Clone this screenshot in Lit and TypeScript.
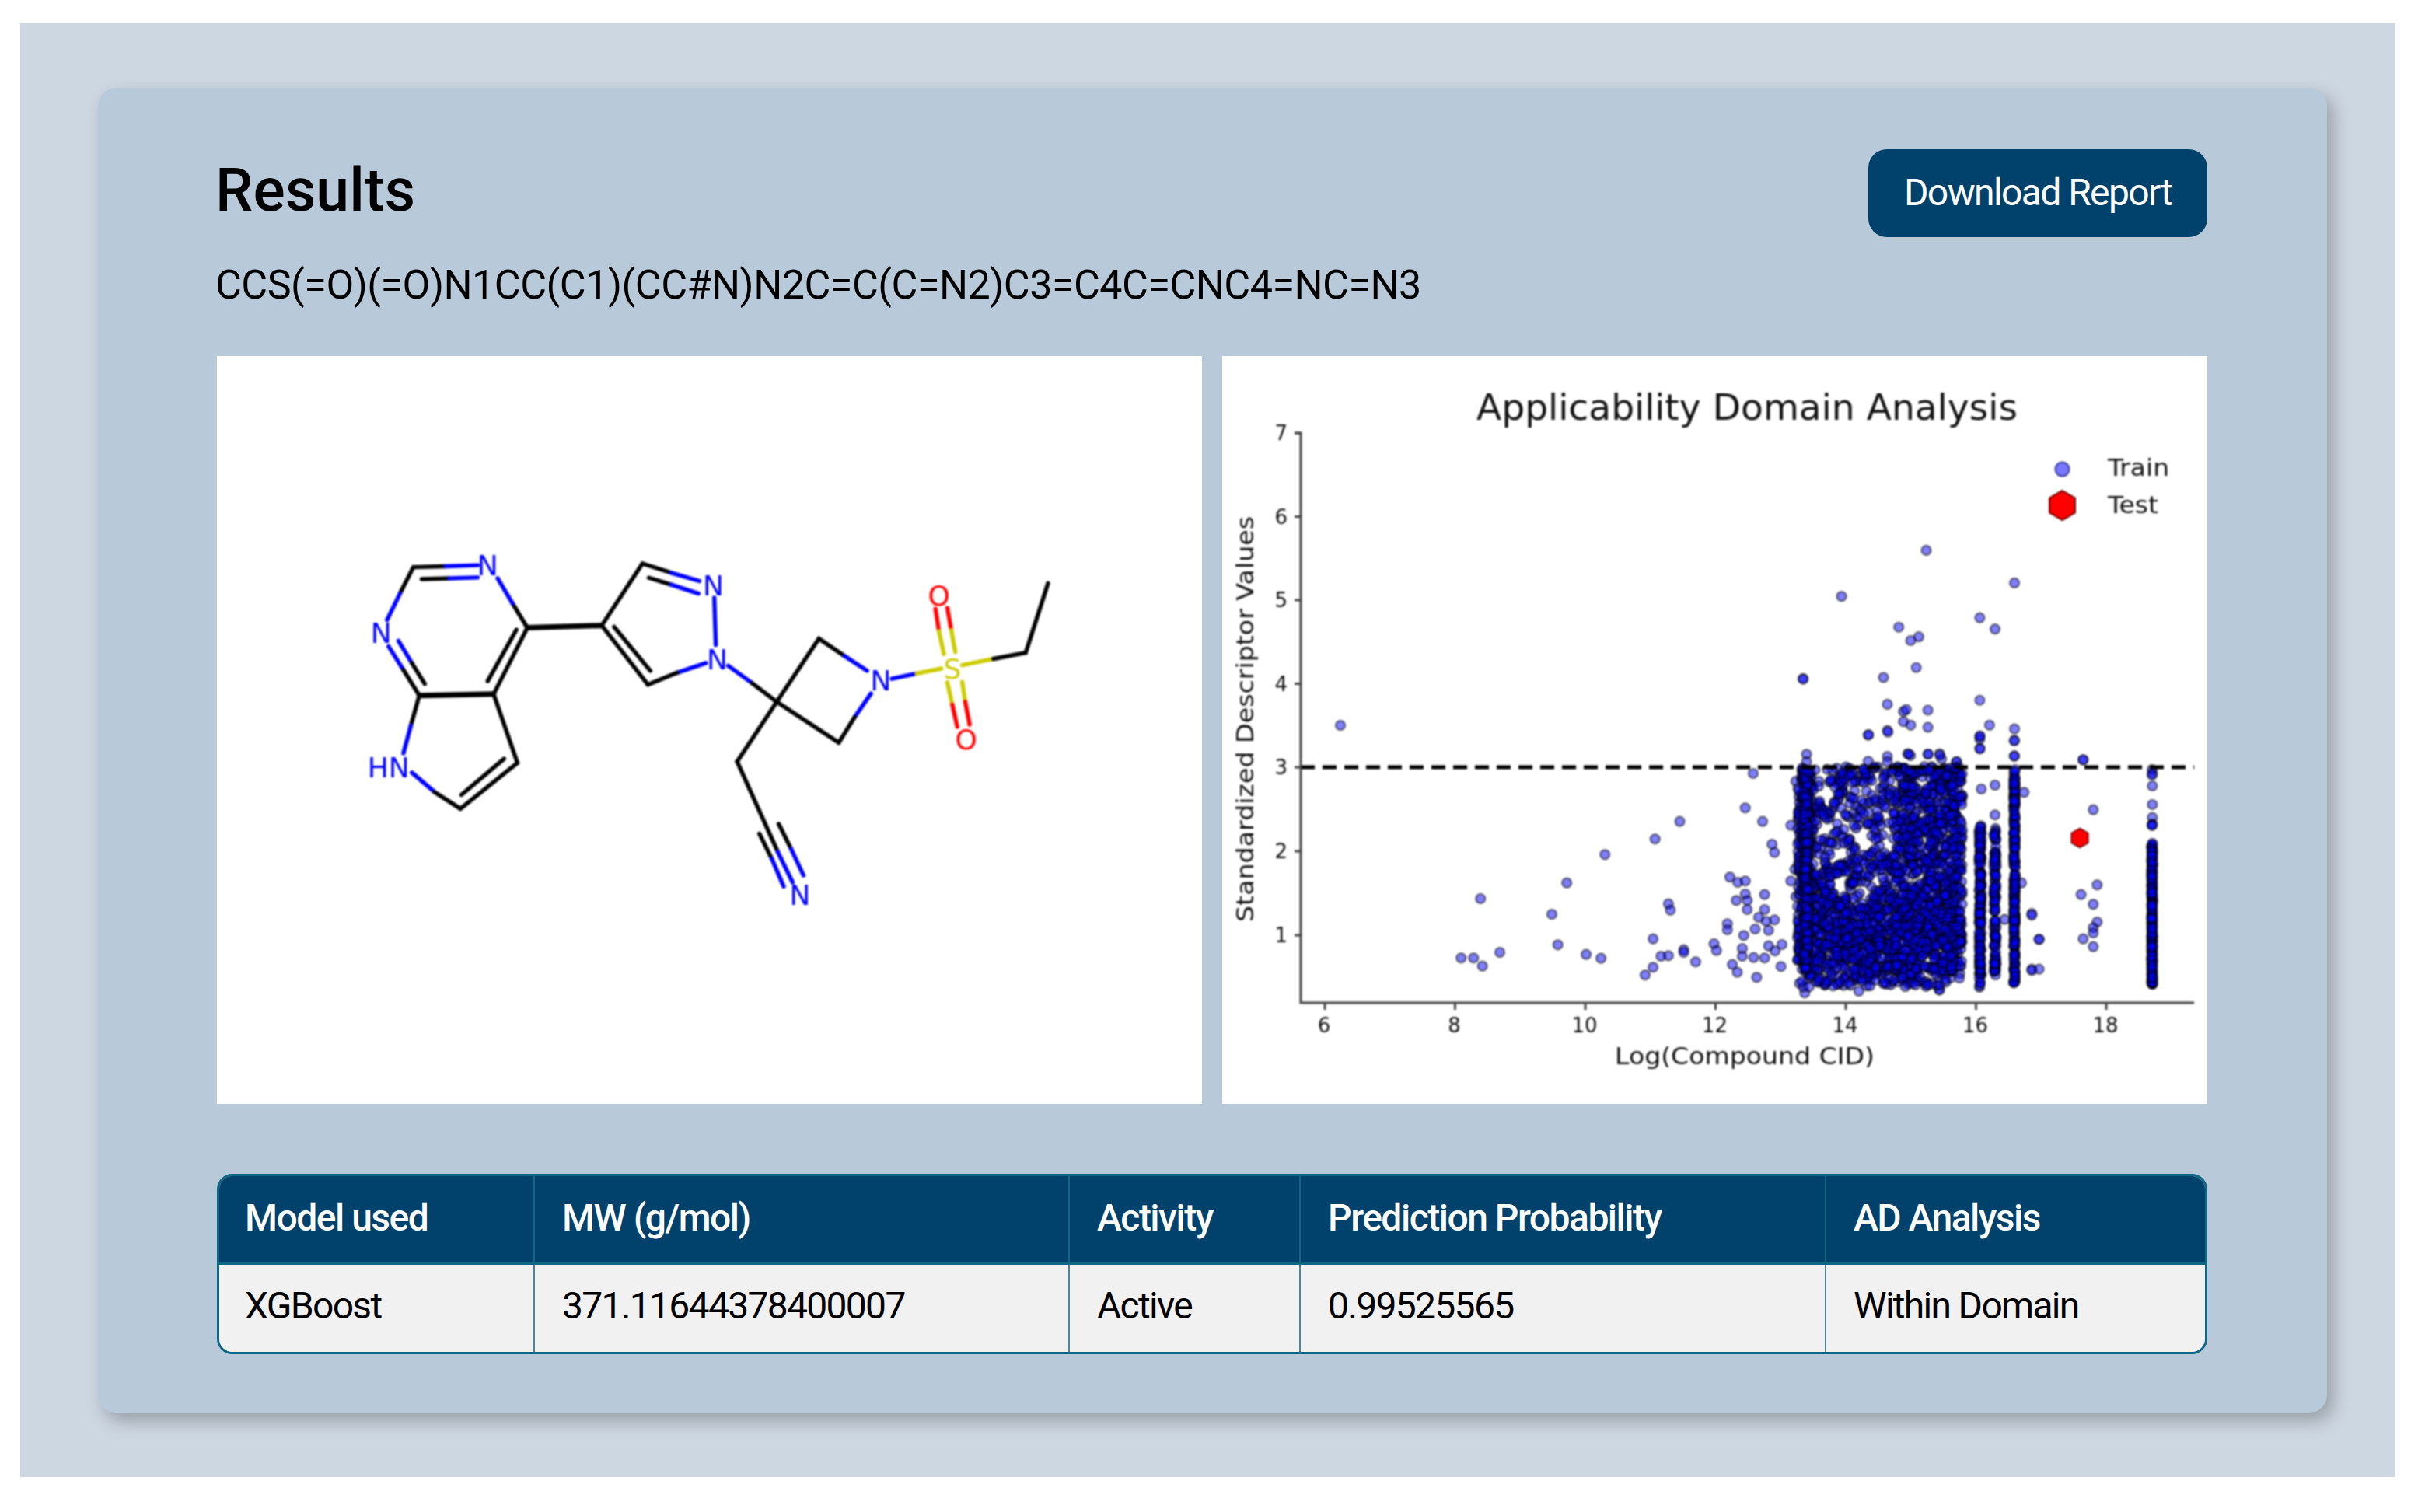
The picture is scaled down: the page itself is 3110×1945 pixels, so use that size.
import { LitElement, html, css, svg } from "lit";
import { customElement } from "lit/decorators.js";

const BLUE = "#0000ff", RED = "#ff0000", YEL = "#cccc00", BLK = "#000000";
type Seg = [number, number, number, number, string, number?];

// coordinates are read off the reference's molecule region
const mx = (x: number) => 420 + x / 1.568;
const my = (y: number) => 660 + y / 2.8;

const BONDS: Seg[] = [
  [175, 195, 240, 192, BLK], [240, 192, 305, 188, BLUE], [192, 238, 248, 235, BLK], [248, 235, 305, 232, BLUE],
  [175, 195, 148, 290, BLK], [148, 290, 122, 385, BLUE],
  [125, 480, 155, 565, BLUE], [155, 565, 187, 657, BLK], [145, 460, 172, 540, BLUE], [172, 540, 198, 615, BLK],
  [187, 657, 337, 652, BLK, 7], [337, 652, 405, 413, BLK], [325, 605, 383, 420, BLK],
  [405, 413, 375, 325, BLK], [375, 325, 345, 235, BLUE], [405, 413, 555, 405, BLK, 7],
  [187, 657, 170, 765, BLK], [170, 765, 155, 865, BLUE], [172, 935, 218, 1005, BLUE], [218, 1005, 270, 1065, BLK],
  [270, 1065, 385, 900, BLK], [272, 1015, 358, 885, BLK], [385, 900, 337, 652, BLK],
  [555, 405, 637, 182, BLK], [637, 182, 695, 215, BLK], [695, 215, 752, 245, BLUE],
  [650, 233, 695, 258, BLK], [695, 258, 750, 290, BLUE], [782, 305, 785, 475, BLUE],
  [765, 540, 707, 575, BLUE], [707, 575, 648, 618, BLK], [648, 618, 555, 405, BLK], [653, 568, 580, 410, BLK],
  [810, 550, 858, 612, BLUE], [858, 612, 908, 680, BLK], [908, 680, 993, 452, BLK],
  [993, 452, 1045, 515, BLK], [1045, 515, 1090, 568, BLUE], [1098, 650, 1065, 735, BLUE], [1065, 735, 1033, 827, BLK],
  [1033, 827, 908, 680, BLK], [1140, 597, 1190, 578, BLUE], [1190, 578, 1240, 560, YEL],
  [1282, 548, 1345, 525, YEL], [1345, 525, 1410, 503, BLK], [1410, 503, 1455, 253, BLK],
  [1228, 345, 1235, 425, RED], [1235, 425, 1245, 508, YEL], [1252, 342, 1260, 422, RED], [1260, 422, 1268, 500, YEL],
  [1252, 610, 1262, 690, YEL], [1262, 690, 1272, 770, RED], [1282, 608, 1288, 680, YEL], [1288, 680, 1297, 762, RED],
  [908, 680, 828, 895, BLK], [828, 895, 910, 1220, BLK], [910, 1220, 940, 1330, BLUE],
  [873, 1155, 898, 1245, BLK], [898, 1245, 922, 1345, BLUE], [912, 1120, 937, 1210, BLK], [937, 1210, 962, 1305, BLUE],
];

const LABELS: [number, number, string, string][] = [
  [325, 225, "N", BLUE], [110, 468, "N", BLUE], [125, 952, "HN", BLUE], [780, 298, "N", BLUE], [788, 562, "N", BLUE],
  [1118, 638, "N", BLUE], [1262, 595, "S", YEL], [1235, 332, "O", RED], [1290, 852, "O", RED], [955, 1410, "N", BLUE],
];

// sparse train points, in page pixels
const z5 = (a: number[]) => a.map((v, i) => (i % 2 ? 460 + v / 2.904 : 2300 + v / 2.8));
const z6 = (a: number[]) => a.map((v, i) => (i % 2 ? 940 + v / 3 : 1570 + v / 1.568));
const z7 = (a: number[]) => a.map((v, i) => (i % 2 ? 940 + v / 3 : 2400 + v / 3));
const SPARSE: number[] = [
  1724, 933, 2319, 873,
  ...z5([497, 720, 815, 842, 192, 892, 398, 1007, 690, 972, 745, 1014, 470, 1043, 441, 1057, 461, 1158, 343, 1195, 54, 1201, 690, 1280, 357, 1295, 503, 1317, 415, 1322, 425, 1315, 415, 1360, 441, 1373, 503, 1381, 357, 1393, 288, 1410, 725, 1373, 815, 1387, 815, 1430, 690, 1415, 690, 1425, 690, 1460, 66, 1482, 66, 1510, 357, 1490, 357, 1510, 430, 1480, 440, 1487, 503, 1482, 545, 1480, 552, 1500, 288, 1508, 606, 1510, 815, 1488, 1062, 1503]),
  ...z6([1074, 165, 1058, 298, 1093, 350, 926, 350, 876, 418, 775, 478, 1112, 438, 1117, 470, 1027, 565, 1043, 585, 1058, 580, 698, 587, 524, 648, 1097, 632, 1058, 630, 1040, 655, 1062, 655, 903, 668, 907, 692, 1062, 690, 1097, 690, 668, 708, 1085, 720, 1117, 730, 1100, 735, 1022, 745, 1022, 768, 1078, 765, 1105, 770, 1055, 790, 872, 803, 680, 826, 995, 822, 1000, 848, 1105, 830, 1132, 825, 1118, 850, 1052, 840, 934, 845, 934, 855, 563, 855, 485, 877, 510, 877, 737, 863, 767, 878, 888, 870, 903, 868, 1052, 870, 1075, 875, 1097, 877, 958, 892, 528, 908, 1032, 902, 1130, 910, 872, 913, 1042, 932, 856, 943, 1081, 952, 1160, 640, 1150, 580, 1158, 535, 1150, 365, 1160, 195, 1287, 1005, 1178, 1012, 1450, 1000]),
  ...z7([10, 15, 85, 5, 440, 20, 440, 70, 572, 38, 572, 98, 838, 112, 165, 90, 240, 90, 285, 95, 350, 120, 445, 225, 498, 210, 610, 238, 877, 305, 1105, 285, 1105, 335, 1105, 360, 1105, 213, 1105, 165, 498, 325, 600, 587, 892, 595, 830, 632, 877, 670, 892, 738, 877, 760, 877, 780, 838, 803, 877, 833, 640, 705, 640, 712, 668, 805, 668, 805, 640, 920, 640, 925, 668, 920, 535, 728, 282, 1000, 438, 990]),
];

function rng(seed: number) {
  let s = seed;
  return () => {
    s = (s * 1664525 + 1013904223) >>> 0;
    return s / 4294967296;
  };
}

const HOLES: [number, number, number, number][] = [
  [2396, 1077, 10, 18], [2367, 1137, 9, 12], [2399, 1150, 7, 14], [2345, 1067, 12, 8], [2354, 1023, 10, 10],
  [2424, 1047, 8, 8], [2476, 1083, 6, 10], [2476, 1007, 10, 6], [2372, 1100, 7, 10],
  [2473, 1047, 9, 6], [2507, 1073, 5, 8], [2437, 1003, 6, 7], [2405, 1010, 7, 6], [2338, 1110, 6, 9],
];

function dense(): number[] {
  const r = rng(17);
  const out: number[] = [];
  for (let i = 0; i < 3000; i++) {
    const x = 2312 + r() * 212;
    const y = 986 + r() * 284;
    if (HOLES.some(([a, b, c, d]) => ((x - a) / c) ** 2 + ((y - b) / d) ** 2 < 1)) continue;
    // thinning fades out downwards, so the block has no hard edge
    const fade = Math.max(0, Math.min(1, (1190 - y) / 110));
    if (x > 2330 && x < 2435 && r() < 0.6 * fade) continue;
    if (x >= 2435 && r() < 0.25 * fade) continue;
    if (y > 1250 && r() < 0.55) continue;
    out.push(x, y);
  }
  for (let i = 0; i < 220; i++) out.push(2320 + r() * 6, 990 + r() * 260);
  const col = (x: number, y0: number, y1: number, n: number, w = 1.5, gap?: [number, number]) => {
    for (let i = 0; i < n; i++) {
      const y = y0 + r() * (y1 - y0);
      if (gap && y > gap[0] && y < gap[1]) continue;
      out.push(x + (r() - 0.5) * w, y);
    }
  };
  col(2547, 1060, 1268, 150, 3, [1112, 1118]);
  col(2566, 1064, 1256, 100, 3, [1175, 1182]);
  col(2591, 990, 1265, 240, 2, [1118, 1124]);
  col(2768, 1085, 1266, 300, 1);
  out.push(2768, 990, 2768, 997, 2768, 1061, 2768, 1062);
  return out;
}
const DENSE = dense();

const HEX = (cx: number, cy: number, r: number) =>
  [0, 1, 2, 3, 4, 5]
    .map((i) => {
      const a = ((60 * i - 90) * Math.PI) / 180;
      return `${cx + r * Math.cos(a)},${cy + r * Math.sin(a)}`;
    })
    .join(" ");

const fx = (v: number) => 1704 + (v - 6) * 83.75;
const fy = (v: number) => (v > 3 ? 987 - (v - 3) * 107.5 : 987 + (3 - v) * 108);

@customElement("app-root")
export class AppRoot extends LitElement {
  static styles = css`
    :host { display: block; width: 3110px; height: 1945px; background: #fff; font-family: Roboto, "Liberation Sans", sans-serif; overflow: hidden; }
    .page { box-sizing: border-box; width: 3055px; height: 1870px; margin: 0 0 0 26px; position: relative; top: 30px; background: #cdd7e2; padding: 83px 88px 0 100px; }
    .card { box-sizing: border-box; height: 1705px; background: #b8c9d9; border-radius: 24px; padding: 79px 154px 0 153px; box-shadow: 8px 10px 22px rgba(0,0,0,.26); }
    .head { display: flex; justify-content: space-between; align-items: flex-start; height: 113px; }
    h1 { margin: -3px 0 0 -2px; font-size: 77px; font-weight: 500; line-height: 113px; color: #000; }
    button { width: 436px; height: 113px; border: 0; border-radius: 24px; background: #00426b; color: #fff; font: 400 48px Roboto, sans-serif; letter-spacing: -1.6px; padding: 0 0 2px; }
    .smiles { margin: 0 0 0 -2px; font-size: 52px; letter-spacing: -0.5px; line-height: 70px; height: 153px; padding-top: 27px; box-sizing: border-box; color: #000; }
    .figs { display: flex; gap: 26px; height: 962px; }
    .fig { flex: 1 1 0; background: #fff; min-width: 0; }
    .fig svg { display: block; width: 100%; height: 100%; filter: blur(1px); }
    .wrap { margin-top: 90px; border-radius: 20px; overflow: hidden; box-sizing: border-box; height: 232px; width: 2560px; border: 3px solid #0d6785; }
    table { width: 100%; height: 100%; border-collapse: collapse; table-layout: fixed; }
    th, td { box-sizing: border-box; text-align: left; font-size: 48px; }
    th { background: #00426b; color: #fff; font-weight: 500; letter-spacing: -1.5px; padding: 0 0 3px 35px; height: 112px; border-right: 2px solid #0d6785; border-bottom: 3px solid #0d6785; }
    td { background: #f1f1f1; color: #000; letter-spacing: -1.7px; padding: 0 0 6px 35px; border-right: 2px solid #4f8499; }
    th:first-child, td:first-child { padding-left: 33px; }
    th:last-child, td:last-child { border-right: 0; }
    .w1 { width: 405px; } .w2 { width: 688px; } .w3 { width: 297px; } .w4 { width: 676px; }
    .mol text { font-family: "DejaVu Sans", sans-serif; font-size: 36px; }
    .plot text { font-family: "DejaVu Sans", sans-serif; fill: #111; }
    .t-title { font-size: 46px; }
    .t-tick { font-size: 26px; }
    .t-axis { font-size: 30px; }
    .t-leg { font-size: 30px; }
  `;

  private molecule() {
    return svg`<g class="mol">
      ${BONDS.map(([a, b, c, d, col, w]) => svg`<line x1=${mx(a)} y1=${my(b)} x2=${mx(c)} y2=${my(d)} stroke=${col} stroke-width=${w ?? 5.4} stroke-linecap="round"></line>`)}
      ${LABELS.map(([x, y, t, col]) => svg`<text x=${mx(x)} y=${my(y)} fill=${col} text-anchor="middle">${t}</text>`)}
    </g>`;
  }

  private dots(a: number[]) {
    const out = [];
    for (let i = 0; i < a.length; i += 2) {
      out.push(svg`<circle cx=${a[i]} cy=${a[i + 1]} r="6"></circle>`);
    }
    return out;
  }

  private plot() {
    const ys = [1, 2, 3, 4, 5, 6, 7];
    const xs = [6, 8, 10, 12, 14, 16, 18];
    return svg`<g class="plot">
      <text class="t-title" x="2247" y="540" text-anchor="middle" textLength="696" lengthAdjust="spacingAndGlyphs">Applicability Domain Analysis</text>
      <g fill="#0000ff" fill-opacity=".5" stroke="#000" stroke-opacity=".55" stroke-width="2.2">
        ${this.dots(SPARSE)}${this.dots(DENSE)}
      </g>
      <line x1="1673" y1="987" x2="2822" y2="987" stroke="#000" stroke-width="5" stroke-dasharray="18 10"></line>
      <polygon points=${HEX(2675, 1078, 12.5)} fill="#ff0000" stroke="#600" stroke-width="1.5"></polygon>
      <g stroke="#444" stroke-width="3" fill="none">
        <path d="M1665 557H1673V1290H2822"></path>
        ${ys.map((v) => svg`<line x1="1665" x2="1673" y1=${fy(v)} y2=${fy(v)}></line>`)}
        ${xs.map((v) => svg`<line x1=${fx(v)} x2=${fx(v)} y1="1290" y2="1299"></line>`)}
      </g>
      ${ys.map((v) => svg`<text class="t-tick" x="1656" y=${fy(v) + 9} text-anchor="end">${v}</text>`)}
      ${xs.map((v) => svg`<text class="t-tick" x=${fx(v) - 1} y="1328" text-anchor="middle">${v}</text>`)}
      <text class="t-axis" x="2244" y="1369" text-anchor="middle" textLength="334" lengthAdjust="spacingAndGlyphs">Log(Compound CID)</text>
      <text class="t-axis" transform="translate(1612 925) rotate(-90)" text-anchor="middle" textLength="522" lengthAdjust="spacingAndGlyphs">Standardized Descriptor Values</text>
      <circle cx="2652.5" cy="603.6" r="9" fill="#7777ff" stroke="#3a3a9a" stroke-width="2"></circle>
      <polygon points=${HEX(2652.5, 650, 19)} fill="#ff0000" stroke="#600" stroke-width="2"></polygon>
      <text class="t-leg" x="2711" y="612" textLength="79" lengthAdjust="spacingAndGlyphs">Train</text>
      <text class="t-leg" x="2711" y="660" textLength="65" lengthAdjust="spacingAndGlyphs">Test</text>
    </g>`;
  }

  render() {
    return html`
      <div class="page">
        <div class="card">
          <div class="head">
            <h1>Results</h1>
            <button>Download Report</button>
          </div>
          <p class="smiles">CCS(=O)(=O)N1CC(C1)(CC#N)N2C=C(C=N2)C3=C4C=CNC4=NC=N3</p>
          <div class="figs">
            <div class="fig"><svg viewBox="279 458 1267 962">${this.molecule()}</svg></div>
            <div class="fig"><svg viewBox="1572 458 1267 962">${this.plot()}</svg></div>
          </div>
          <div class="wrap">
            <table>
              <thead>
                <tr>
                  <th class="w1">Model used</th>
                  <th class="w2">MW (g/mol)</th>
                  <th class="w3">Activity</th>
                  <th class="w4">Prediction Probability</th>
                  <th>AD Analysis</th>
                </tr>
              </thead>
              <tbody>
                <tr>
                  <td>XGBoost</td>
                  <td>371.11644378400007</td>
                  <td>Active</td>
                  <td>0.99525565</td>
                  <td>Within Domain</td>
                </tr>
              </tbody>
            </table>
          </div>
        </div>
      </div>
    `;
  }
}
